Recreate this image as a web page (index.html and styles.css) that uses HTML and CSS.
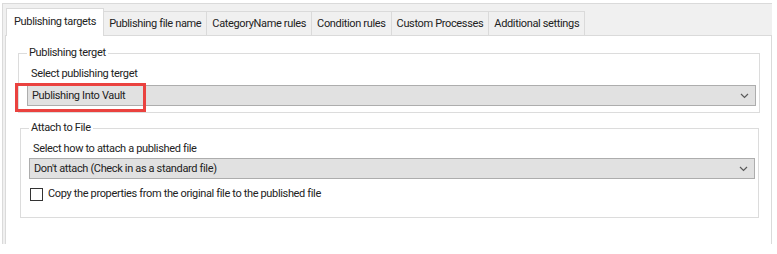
FILE: index.html
```html
<!DOCTYPE html>
<html lang="en">
<head>
  <meta charset="UTF-8" />
  <title>Publishing settings</title>
  <link rel="stylesheet" href="styles.css">
</head>
<body>
  <div class="window">
    <!-- Tab strip -->
    <div class="tabs">
      <div class="tab active">Publishing targets</div>
      <div class="tab">Publishing file name</div>
      <div class="tab">CategoryName rules</div>
      <div class="tab">Condition rules</div>
      <div class="tab">Custom Processes</div>
      <div class="tab">Additional settings</div>
    </div>

    <div class="panel">
      <!-- Publishing target -->
      <fieldset class="group group-target">
        <legend>Publishing terget</legend>
        <div class="field-label">Select publishing terget</div>
        <div class="select select-target">
          <span>Publishing Into Vault</span>
          <svg class="chevron" width="9" height="6" viewBox="0 0 9 6"><path d="M1 1 L4.5 4.5 L8 1" fill="none" stroke="#5a5a5a" stroke-width="1.2"/></svg>
          <span class="callout"></span>
        </div>
      </fieldset>

      <!-- Attach to file -->
      <fieldset class="group group-attach">
        <legend>Attach to File</legend>
        <div class="field-label">Select how to attach a published file</div>
        <div class="select select-attach">
          <span>Don't attach (Check in as a standard file)</span>
          <svg class="chevron" width="9" height="6" viewBox="0 0 9 6"><path d="M1 1 L4.5 4.5 L8 1" fill="none" stroke="#5a5a5a" stroke-width="1.2"/></svg>
        </div>
        <label class="check-row">
          <span class="checkbox"></span>
          <span>Copy the properties from the original file to the published file</span>
        </label>
      </fieldset>
    </div>
  </div>
</body>
</html>
```

FILE: styles.css
```css
body {
  margin: 0;
  background: #fff;
  font-family: Roboto, "Liberation Sans", sans-serif;
  font-size: 11px;
  letter-spacing: -0.35px;
  color: #222;
}

.window {
  margin: 3px 0 0 2px;
  width: 770px;
  height: 241px;
  background: #f0f0f0;
  border-top: 1px solid #dadada;
  border-left: 1px solid #dadada;
  box-sizing: border-box;
  display: flex;
  flex-direction: column;
}

.tabs {
  display: flex;
  align-items: flex-end;
  padding: 4px 0 0 3px;
  height: 31px;
  box-sizing: border-box;
  position: relative;
  z-index: 1;
}

.tab {
  height: 24px;
  line-height: 24px;
  padding: 0 5px;
  border: 1px solid #dadada;
  border-bottom: none;
  border-left: none;
  box-sizing: border-box;
  background: #f0f0f0;
  white-space: nowrap;
}

.tab.active {
  height: 28px;
  line-height: 26px;
  margin-bottom: -1px;
  background: #fff;
  border-left: 1px solid #dadada;
  padding: 0 7px;
}

.panel {
  flex: 1;
  margin-left: 2px;
  background: #fff;
  border: 1px solid #dadada;
  border-bottom: none;
  display: flex;
  flex-direction: column;
}

.group {
  border: 1px solid #dcdcdc;
  margin: 10px 11px 0 12px;
  padding: 0 3px 6px 8px;
  min-width: 0;
}

.group-attach {
  margin: 8px 12px 0 14px;
  padding-bottom: 16px;
}

.group legend {
  padding: 0 2px;
  line-height: 14px;
}

.field-label {
  line-height: 14px;
  padding-left: 4px;
  margin-top: 7px;
}

.group-attach .field-label {
  margin-top: 7px;
}

.select {
  position: relative;
  height: 21px;
  margin-top: 4px;
  background: #e1e1e1;
  border: 1px solid #adadad;
  box-sizing: border-box;
  display: flex;
  align-items: center;
  justify-content: space-between;
  padding: 0 6px 0 4px;
}

.select-attach {
  margin-top: 2px;
}

.chevron {
  display: block;
}

.callout {
  position: absolute;
  left: -13px;
  top: -3px;
  width: 131px;
  height: 29px;
  border: 3px solid #ea423f;
  box-sizing: border-box;
}

.check-row {
  display: flex;
  align-items: center;
  gap: 5px;
  margin-top: 8px;
  line-height: 14px;
}

.checkbox {
  width: 13px;
  height: 13px;
  border: 1px solid #333;
  box-sizing: border-box;
  background: #fff;
  margin-left: 1px;
}
```
